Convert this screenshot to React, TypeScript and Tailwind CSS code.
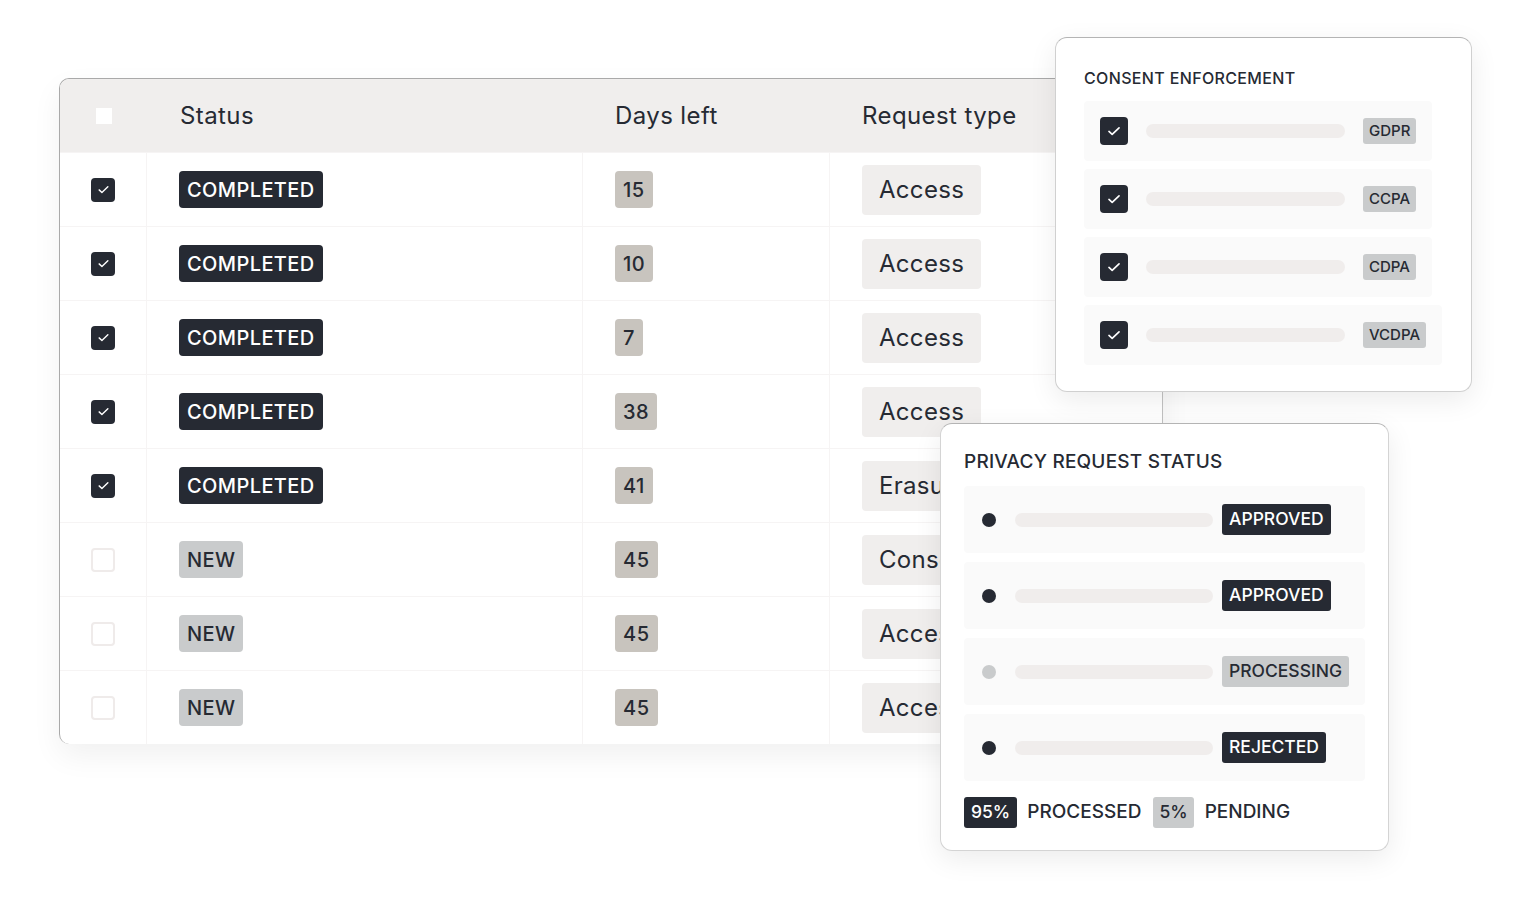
import React from "react"

const rows = [
  { checked: true, status: "COMPLETED", days: "15", type: "Access" },
  { checked: true, status: "COMPLETED", days: "10", type: "Access" },
  { checked: true, status: "COMPLETED", days: "7", type: "Access" },
  { checked: true, status: "COMPLETED", days: "38", type: "Access" },
  { checked: true, status: "COMPLETED", days: "41", type: "Erasure" },
  { checked: false, status: "NEW", days: "45", type: "Consent" },
  { checked: false, status: "NEW", days: "45", type: "Access" },
  { checked: false, status: "NEW", days: "45", type: "Access" },
]

const laws = ["GDPR", "CCPA", "CDPA", "VCDPA"]

const requests = [
  { label: "APPROVED", dark: true },
  { label: "APPROVED", dark: true },
  { label: "PROCESSING", dark: false },
  { label: "REJECTED", dark: true },
]

function Check({ size }: { size: number }) {
  return (
    <svg width={size} height={size} viewBox="0 0 24 24" fill="none">
      <path d="M6.5 12.5l3.5 3.2L17.5 8.5" stroke="white" strokeWidth="1.8" strokeLinecap="round" strokeLinejoin="round" />
    </svg>
  )
}

function CheckBox({ checked, big }: { checked: boolean; big?: boolean }) {
  const dim = big ? "w-[28px] h-[28px]" : "w-[24px] h-[24px]"
  if (!checked) {
    return <div className={`${dim} rounded-[4px] border-2 border-[#efebea] bg-white`} />
  }
  return (
    <div className={`${dim} rounded-[4px] bg-[#262a33] flex items-center justify-center`}>
      <Check size={big ? 22 : 19} />
    </div>
  )
}

export default function App() {
  return (
    <div
      className="relative w-[1536px] h-[900px] bg-white overflow-hidden text-[#262a33]"
      style={{ fontFamily: "Inter, 'Noto Sans', sans-serif" }}
    >
      {/* Requests table */}
      <div className="ml-[59px] mt-[78px] w-[1104px] rounded-[10px] border-t border-l border-[#a9a9a9] border-r border-r-[#c2c2c2] bg-white overflow-hidden shadow-[0_12px_30px_rgba(0,0,0,0.06)]">
        <div className="flex h-[73px] bg-[#f0eeed] items-center text-[24px] tracking-[0.4px]">
          <div className="w-[87px] flex justify-center">
            <div className="w-[16px] h-[16px] bg-white" />
          </div>
          <div className="w-[436px] pl-[33px]">Status</div>
          <div className="w-[247px] pl-[32px]">Days left</div>
          <div className="flex-1 pl-[32px]">Request type</div>
        </div>
        {rows.map((r, i) => (
          <div key={i} className="flex h-[74px] border-t border-[#f6f4f4] first:border-t-0">
            <div className="w-[87px] flex items-center justify-center border-r border-[#f6f4f4]">
              <CheckBox checked={r.checked} />
            </div>
            <div className="w-[436px] pl-[32px] flex items-center border-r border-[#f6f4f4]">
              <span
                className={`h-[37px] flex items-center px-[8px] rounded-[4px] text-[20px] font-medium tracking-[0.4px] ${
                  r.status === "COMPLETED" ? "bg-[#262a33] text-white" : "bg-[#c9cbcc] text-[#262a33]"
                }`}
              >
                {r.status}
              </span>
            </div>
            <div className="w-[247px] pl-[32px] flex items-center border-r border-[#f6f4f4]">
              <span className="h-[37px] flex items-center px-[8px] rounded-[4px] bg-[#c8c4be] text-[20px] font-medium tracking-[0.5px]">
                {r.days}
              </span>
            </div>
            <div className="flex-1 pl-[32px] flex items-center">
              <span className="h-[50px] flex items-center px-[17px] rounded-[4px] bg-[#f0eeed] text-[24px] tracking-[0.3px]">
                {r.type}
              </span>
            </div>
          </div>
        ))}
      </div>

      {/* Consent enforcement card */}
      <div className="absolute left-[1055px] top-[37px] w-[417px] h-[355px] rounded-[12px] bg-white border border-[#d0d0d0] border-t-[#b4b4b4] shadow-[0_8px_28px_rgba(0,0,0,0.08)] pt-[30px] pl-[28px]">
        <div className="text-[16px] font-medium leading-[20px] tracking-[0.35px]">CONSENT ENFORCEMENT</div>
        <div className="mt-[13px] flex flex-col gap-[8px] items-start">
          {laws.map((l) => (
            <div key={l} className="h-[60px] flex items-center pl-[16px] pr-[16px] rounded-[4px] bg-[#fafafa]">
              <CheckBox checked big />
              <div className="ml-[18px] w-[199px] h-[14px] rounded-full bg-[#f0edec]" />
              <span className="ml-[18px] h-[26px] flex items-center px-[6px] rounded-[3px] bg-[#c9cbcc] text-[15px] font-medium">
                {l}
              </span>
            </div>
          ))}
        </div>
      </div>

      {/* Privacy request status card */}
      <div className="absolute left-[940px] top-[423px] w-[449px] h-[428px] rounded-[12px] bg-white border border-[#d4d4d4] border-t-[#b4b4b4] shadow-[0_8px_28px_rgba(0,0,0,0.08)] pt-[26px] px-[23px]">
        <div className="text-[19px] font-medium leading-[24px] tracking-[0.2px]">PRIVACY REQUEST STATUS</div>
        <div className="mt-[12px] flex flex-col gap-[9px]">
          {requests.map((q, i) => (
            <div key={i} className="h-[67px] flex items-center pl-[18px] rounded-[4px] bg-[#fafafa]">
              <div className={`w-[14px] h-[14px] rounded-full ${q.dark ? "bg-[#262a33]" : "bg-[#c9cbcc]"}`} />
              <div className="ml-[19px] w-[198px] h-[14px] rounded-full bg-[#f0edec]" />
              <span
                className={`ml-[9px] h-[31px] flex items-center px-[7px] rounded-[3px] text-[17.5px] font-medium ${
                  q.dark ? "bg-[#262a33] text-white" : "bg-[#c9cbcc] text-[#262a33]"
                }`}
              >
                {q.label}
              </span>
            </div>
          ))}
        </div>
        <div className="mt-[16px] flex items-center text-[19px] font-medium">
          <span className="h-[31px] flex items-center px-[7px] rounded-[3px] bg-[#262a33] text-white text-[17.5px]">95%</span>
          <span className="ml-[10px]">PROCESSED</span>
          <span className="ml-[12px] h-[31px] flex items-center px-[6px] rounded-[3px] bg-[#c9cbcc] text-[17.5px]">5%</span>
          <span className="ml-[11px]">PENDING</span>
        </div>
      </div>
    </div>
  )
}
